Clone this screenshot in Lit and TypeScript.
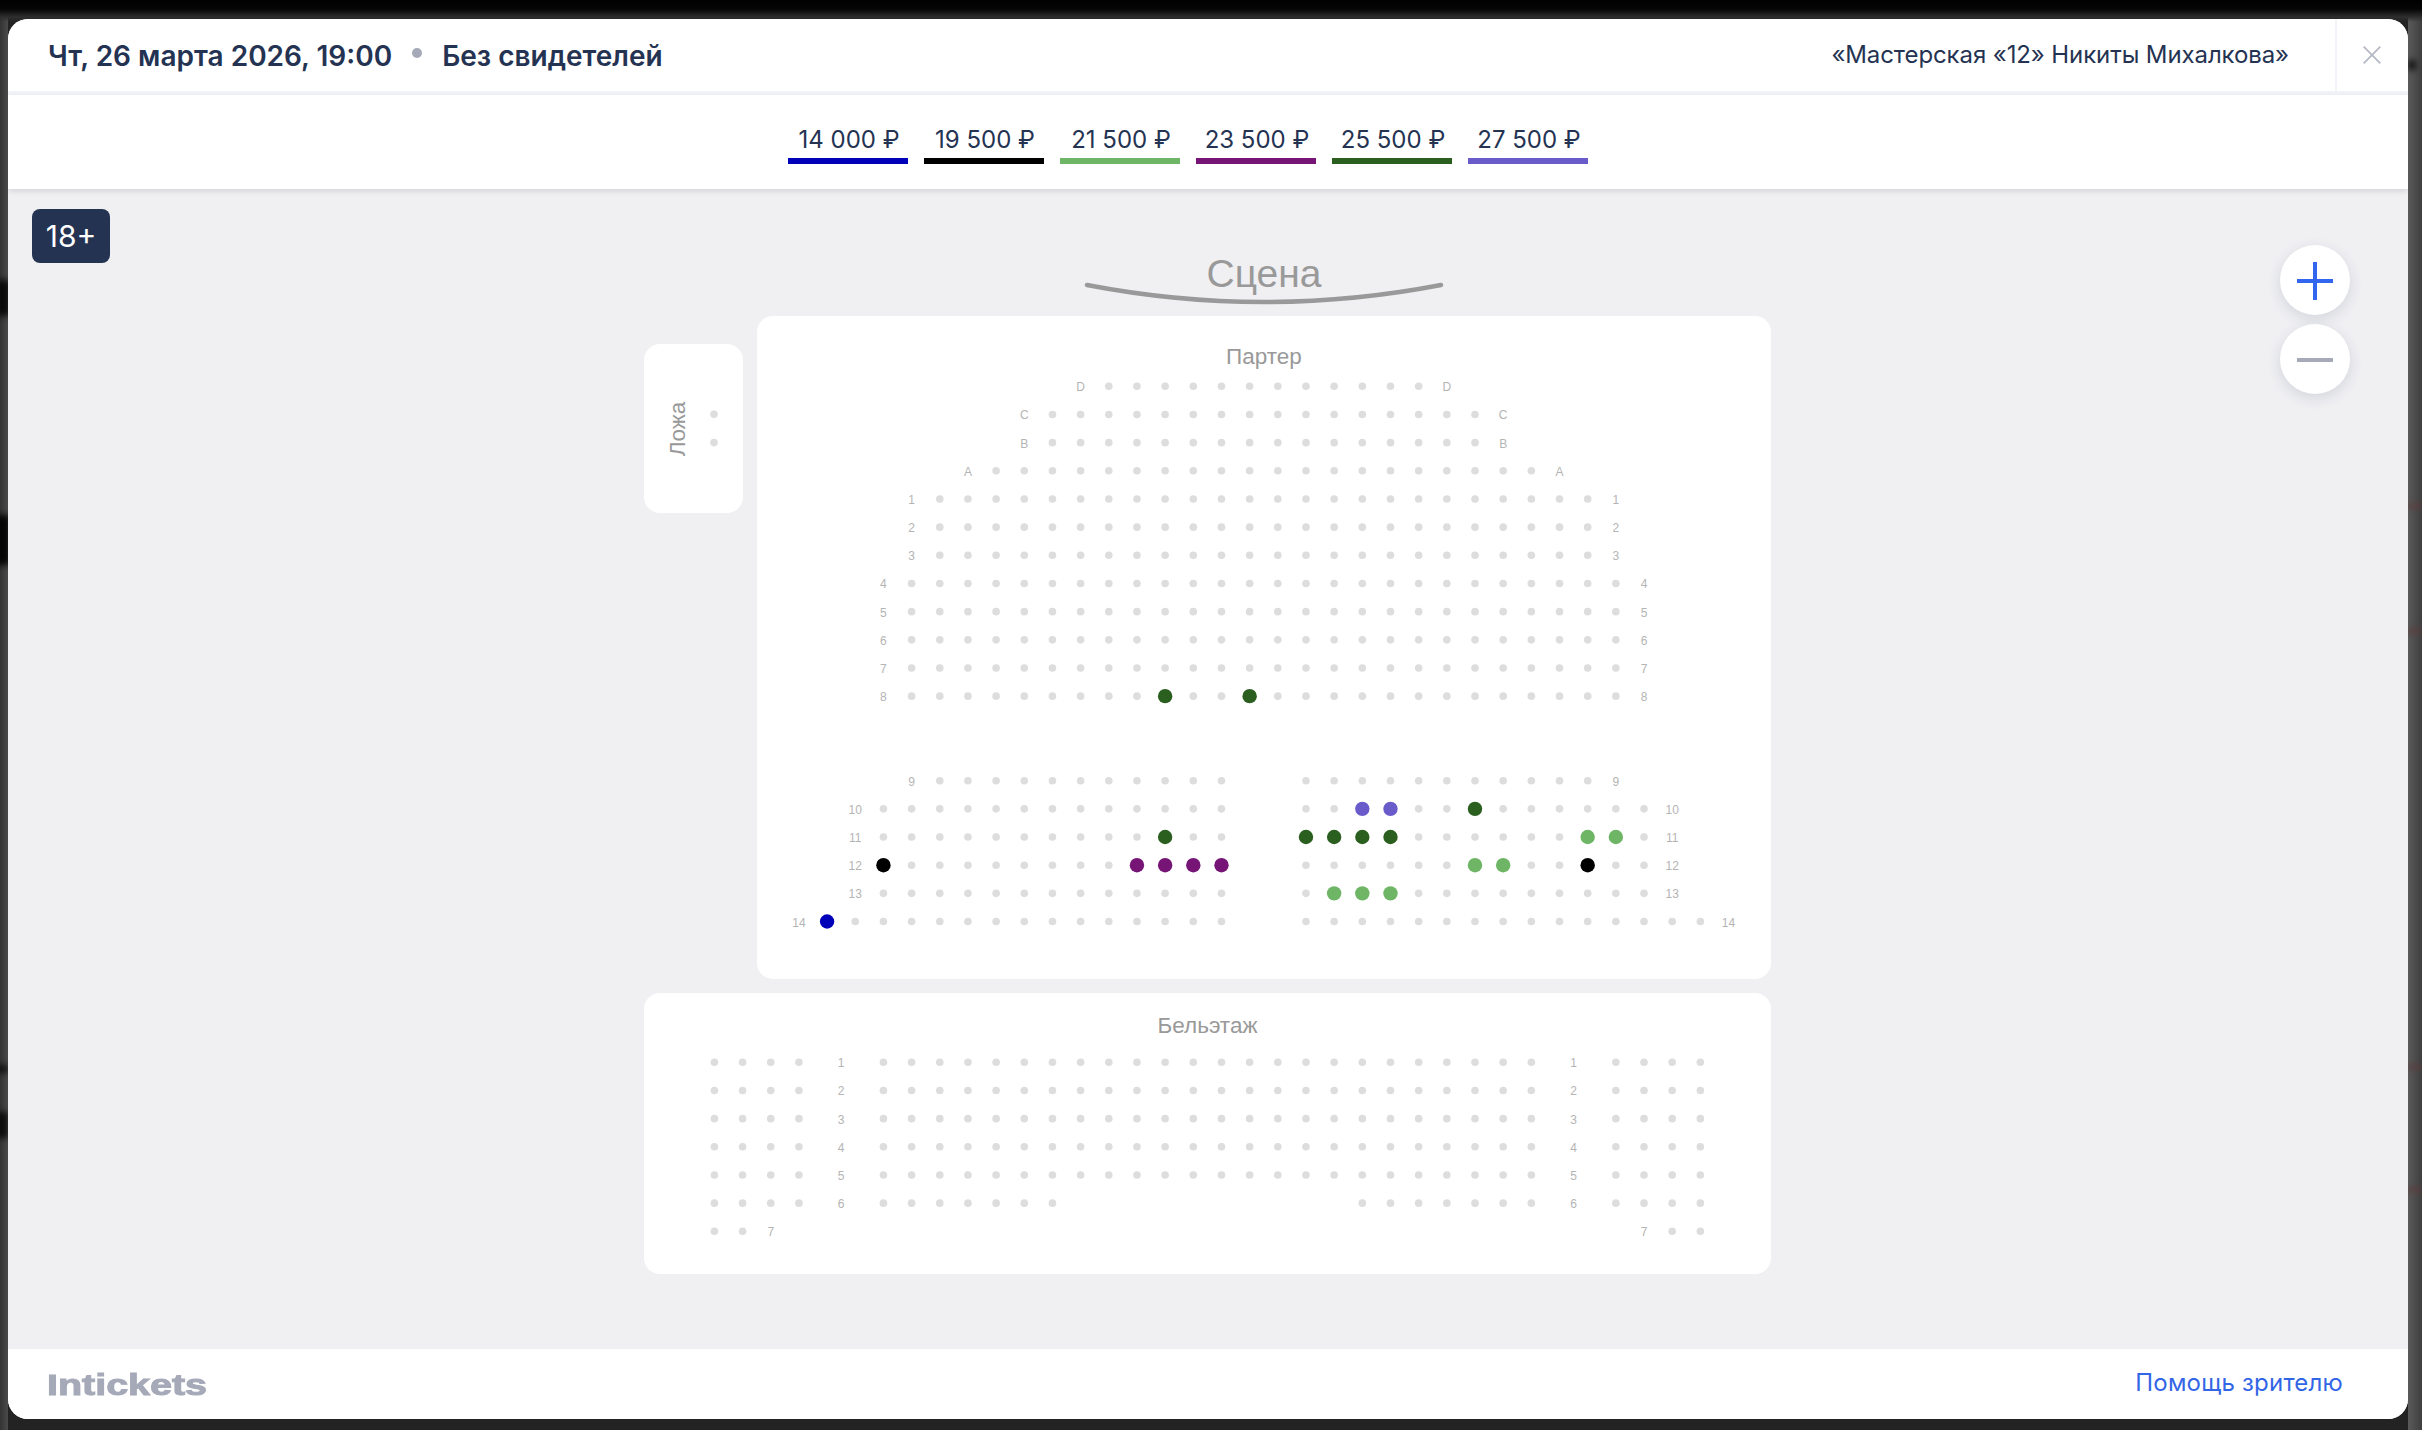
import { LitElement, html, css, svg } from "lit";
import { customElement } from "lit/decorators.js";

const STEP = 28.17;
const X0 = 911.6;
const Y0 = 386.3;
const cx = (c: number) => X0 + c * STEP;
const OX = 8;
const OY = 189;

const C = {
  blue: "#0000b8",
  black: "#000000",
  light: "#6fb566",
  purple: "#761576",
  dark: "#2a5f1f",
  slate: "#6a5bcb",
};

const PRICES = [
  ["14 000 ₽", C.blue],
  ["19 500 ₽", C.black],
  ["21 500 ₽", C.light],
  ["23 500 ₽", C.purple],
  ["25 500 ₽", C.dark],
  ["27 500 ₽", C.slate],
];

type Row = { r: number; label: string; spans: [number, number][]; labels: number[] };

const PARTER: Row[] = [
  { r: 0, label: "D", spans: [[7, 18]], labels: [6, 19] },
  { r: 1, label: "C", spans: [[5, 20]], labels: [4, 21] },
  { r: 2, label: "B", spans: [[5, 20]], labels: [4, 21] },
  { r: 3, label: "A", spans: [[3, 22]], labels: [2, 23] },
  { r: 4, label: "1", spans: [[1, 24]], labels: [0, 25] },
  { r: 5, label: "2", spans: [[1, 24]], labels: [0, 25] },
  { r: 6, label: "3", spans: [[1, 24]], labels: [0, 25] },
  { r: 7, label: "4", spans: [[0, 25]], labels: [-1, 26] },
  { r: 8, label: "5", spans: [[0, 25]], labels: [-1, 26] },
  { r: 9, label: "6", spans: [[0, 25]], labels: [-1, 26] },
  { r: 10, label: "7", spans: [[0, 25]], labels: [-1, 26] },
  { r: 11, label: "8", spans: [[0, 25]], labels: [-1, 26] },
  { r: 14, label: "9", spans: [[1, 11], [14, 24]], labels: [0, 25] },
  { r: 15, label: "10", spans: [[-1, 11], [14, 26]], labels: [-2, 27] },
  { r: 16, label: "11", spans: [[-1, 11], [14, 26]], labels: [-2, 27] },
  { r: 17, label: "12", spans: [[-1, 11], [14, 26]], labels: [-2, 27] },
  { r: 18, label: "13", spans: [[-1, 11], [14, 26]], labels: [-2, 27] },
  { r: 19, label: "14", spans: [[-3, 11], [14, 28]], labels: [-4, 29] },
];

const SOLD: Record<string, string> = {
  "11:9": C.dark,
  "11:12": C.dark,
  "15:16": C.slate,
  "15:17": C.slate,
  "15:20": C.dark,
  "16:9": C.dark,
  "16:14": C.dark,
  "16:15": C.dark,
  "16:16": C.dark,
  "16:17": C.dark,
  "16:24": C.light,
  "16:25": C.light,
  "17:-1": C.black,
  "17:8": C.purple,
  "17:9": C.purple,
  "17:10": C.purple,
  "17:11": C.purple,
  "17:20": C.light,
  "17:21": C.light,
  "17:24": C.black,
  "18:15": C.light,
  "18:16": C.light,
  "18:17": C.light,
  "19:-3": C.blue,
};

const BY0 = 1062.3;
const BALCONY: Row[] = [0, 1, 2, 3, 4].map((r) => ({
  r,
  label: String(r + 1),
  spans: [[-7, -4], [-1, 22], [25, 28]] as [number, number][],
  labels: [-2.5, 23.5],
}));
BALCONY.push({ r: 5, label: "6", spans: [[-7, -4], [-1, 5], [16, 22], [25, 28]], labels: [-2.5, 23.5] });
BALCONY.push({ r: 6, label: "7", spans: [[-7, -6], [27, 28]], labels: [-5, 26] });

/* Blurred page content showing behind the modal at its edges: [left, top, width, height, colour] */
const BEHIND: [number, number, number, number, string][] = [
  [-6, 280, 16, 36, "#0a0a0a"],
  [-8, 515, 18, 50, "#050505"],
  [-6, 1065, 14, 8, "#111"],
  [-6, 1112, 14, 26, "#0c0c0c"],
  [2408, 60, 8, 10, "#111"],
  [2408, 504, 14, 4, "#5e3a3c"],
  [2408, 629, 14, 4, "#5e3a3c"],
  [2408, 1065, 14, 4, "#5e3a3c"],
  [2408, 1188, 14, 4, "#5e3a3c"],
];

function seat(x: number, y: number, color?: string) {
  return svg`<circle cx=${x - OX} cy=${y - OY} r=${color ? 7.2 : 3.8} fill=${color ?? "#dddddd"}></circle>`;
}
function label(x: number, y: number, t: string) {
  return svg`<text class="rl" x=${x - OX} y=${y - OY + 5} text-anchor="middle">${t}</text>`;
}
function rows(list: Row[], y0: number, sold = false) {
  return list.map((row) => {
    const y = y0 + row.r * STEP;
    const out = [];
    for (const [a, b] of row.spans) {
      for (let c = a; c <= b; c++) out.push(seat(cx(c), y, sold ? SOLD[`${row.r}:${c}`] : undefined));
    }
    for (const l of row.labels) out.push(label(cx(l), y, row.label));
    return out;
  });
}

@customElement("app-root")
export class AppRoot extends LitElement {
  static styles = css`
    :host {
      display: block;
      font-family: Inter, "Noto Sans", sans-serif;
      color: #253353;
    }
    .page {
      width: 2422px;
      height: 1430px;
      box-sizing: border-box;
      padding: 19px 14px 11px 8px;
      position: relative;
      overflow: hidden;
      background: #232323;
    }
    .backdrop {
      position: absolute;
      inset: 0;
      background:
        linear-gradient(180deg, #000 0, #050505 9px, #2e2e2e 17px, transparent 22px),
        linear-gradient(90deg, #333 0, #4a4a4a 8px, transparent 8px),
        linear-gradient(270deg, #3f3f3f 0, #5a5a5a 14px, transparent 14px),
        #232323;
    }
    .smear {
      position: absolute;
      filter: blur(3px);
    }
    .modal {
      position: relative;
      height: 100%;
      background: #f0f0f3;
      border-radius: 20px;
      overflow: hidden;
      display: flex;
      flex-direction: column;
    }
    .head {
      height: 72px;
      flex: none;
      display: flex;
      align-items: center;
      background: #fff;
      border-bottom: 4px solid #f3f4f9;
      box-sizing: content-box;
    }
    .title {
      flex: 1;
      display: flex;
      align-items: center;
      padding-left: 40px;
      padding-top: 2px;
      font-size: 28px;
      font-weight: 600;
      line-height: 34px;
    }
    .sep {
      width: 10px;
      height: 10px;
      border-radius: 50%;
      background: #a5a9b8;
      margin: -6px 20px 0 20px;
    }
    .venue {
      font-size: 24px;
      line-height: 30px;
      margin-right: 46px;
      letter-spacing: -0.1px;
    }
    .close {
      width: 73px;
      height: 72px;
      flex: none;
      border-left: 2px solid #f3f4f9;
      box-sizing: border-box;
      display: flex;
      align-items: center;
      justify-content: center;
      padding-right: 2px;
    }
    .close svg {
      display: block;
      margin-top: -1px;
    }
    .prices {
      height: 94px;
      flex: none;
      background: #fff;
      box-shadow: 0 2px 6px rgba(0, 0, 0, 0.12);
      display: flex;
      justify-content: center;
      gap: 16px;
      padding: 30px 40px 0 0;
      box-sizing: border-box;
      position: relative;
      z-index: 1;
    }
    .price {
      width: 120px;
      height: 39px;
      box-sizing: border-box;
      border-bottom: 6px solid;
      padding-left: 2px;
      text-align: center;
      font-size: 24px;
      line-height: 30px;
      white-space: nowrap;
      color: #253353;
    }
    .stage {
      flex: 1;
      position: relative;
      min-height: 0;
    }
    .age {
      position: absolute;
      left: 24px;
      top: 20px;
      width: 78px;
      height: 54px;
      border-radius: 8px;
      background: #253353;
      color: #fff;
      font-size: 30px;
      display: flex;
      align-items: center;
      justify-content: center;
    }
    .map {
      position: absolute;
      left: 0;
      top: 0;
      width: 2400px;
      height: 1160px;
      overflow: visible;
    }
    .map .panel {
      fill: #fff;
    }
    .map .rl {
      font: 12px "Liberation Sans", Arial, sans-serif;
      fill: #b4b4b4;
    }
    .map .sec {
      font: 22.5px "Liberation Sans", Arial, sans-serif;
      fill: #999;
    }
    .map .scene {
      font: 39px "Liberation Sans", Arial, sans-serif;
      fill: #999;
    }
    .zoom {
      position: absolute;
      left: 2272px;
      top: 56px;
      display: flex;
      flex-direction: column;
      gap: 9px;
    }
    .zb {
      width: 70px;
      height: 70px;
      border-radius: 50%;
      background: #fff;
      box-shadow: 0 4px 14px rgba(37, 51, 83, 0.14);
      display: flex;
      align-items: center;
      justify-content: center;
    }
    .zb svg {
      margin-top: 1px;
    }
    .foot {
      height: 70px;
      flex: none;
      background: #fff;
      display: flex;
      align-items: center;
      justify-content: space-between;
      padding: 0 65px 0 39px;
    }
    .logo {
      font: bold 29px/30px "Liberation Sans", Arial, sans-serif;
      color: #a5a9b8;
      -webkit-text-stroke: 1px #a5a9b8;
      transform: scaleX(1.36);
      transform-origin: left center;
      margin-top: 1px;
    }
    .help {
      font-size: 24px;
      line-height: 30px;
      color: #3366e6;
      margin-top: -2px;
      letter-spacing: 0.2px;
    }
  `;

  render() {
    return html`<div class="page">
      <div class="backdrop">
        ${BEHIND.map(
          ([l, t, w, h, c]) =>
            html`<div class="smear" style="left:${l}px;top:${t}px;width:${w}px;height:${h}px;background:${c}"></div>`,
        )}
      </div>
      <div class="modal">
        <header class="head">
          <div class="title">
            <span>Чт, 26 марта 2026, 19:00</span><i class="sep"></i><span>Без свидетелей</span>
          </div>
          <div class="venue">«Мастерская «12» Никиты Михалкова»</div>
          <div class="close">
            <svg width="18" height="18" viewBox="0 0 18 18" fill="none" stroke="#b6b9c6" stroke-width="1.8">
              <path d="M.7.7l16.6 16.6M17.3.7L.7 17.3"></path>
            </svg>
          </div>
        </header>
        <nav class="prices">
          ${PRICES.map(([t, c]) => html`<div class="price" style="border-color:${c}">${t}</div>`)}
        </nav>
        <main class="stage">
          <svg class="map" viewBox="0 0 2400 1160">
            <text class="scene" x=${1264 - OX} y=${287 - OY} text-anchor="middle">Сцена</text>
            <path
              d="M${1087 - OX} ${285 - OY}Q${1264 - OX} ${319 - OY} ${1441 - OX} ${285 - OY}"
              fill="none"
              stroke="#999"
              stroke-width="4.5"
              stroke-linecap="round"
            ></path>
            <rect class="panel" x=${757 - OX} y=${316 - OY} width="1014" height="663" rx="16"></rect>
            <rect class="panel" x=${644 - OX} y=${344 - OY} width="99" height="169" rx="16"></rect>
            <rect class="panel" x=${644 - OX} y=${993 - OY} width="1127" height="281" rx="16"></rect>
            <text class="sec" x=${1264 - OX} y=${364 - OY} text-anchor="middle">Партер</text>
            <text class="sec" x=${1207.5 - OX} y=${1033 - OY} text-anchor="middle">Бельэтаж</text>
            <text class="sec" text-anchor="middle" transform="translate(${685 - OX} ${429 - OY}) rotate(-90)">Ложа</text>
            ${seat(714, 414.3)} ${seat(714, 442.6)}
            ${rows(PARTER, Y0, true)} ${rows(BALCONY, BY0)}
          </svg>
          <div class="age">18+</div>
          <div class="zoom">
            <div class="zb">
              <svg width="36" height="38" viewBox="0 0 36 38" fill="none" stroke="#3366ee" stroke-width="4">
                <path d="M18 0v38M0 19h36"></path>
              </svg>
            </div>
            <div class="zb">
              <svg width="36" height="4" viewBox="0 0 36 4" fill="none" stroke="#a5a9b8" stroke-width="4">
                <path d="M0 2h36"></path>
              </svg>
            </div>
          </div>
        </main>
        <footer class="foot">
          <div class="logo">Intickets</div>
          <div class="help">Помощь зрителю</div>
        </footer>
      </div>
    </div>`;
  }
}
